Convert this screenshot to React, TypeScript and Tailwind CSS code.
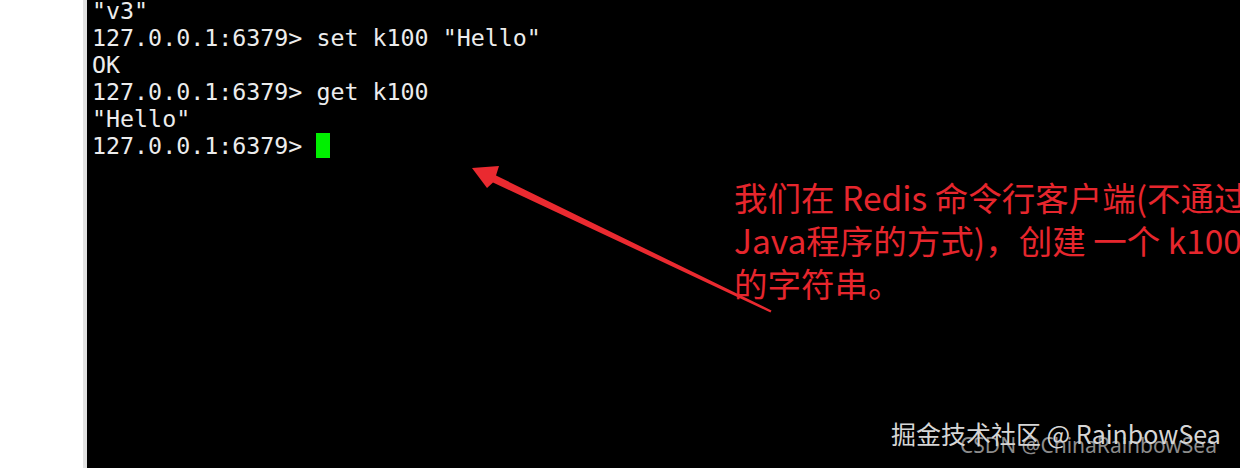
import React from "react";

const lines = [
  '"v3"',
  '127.0.0.1:6379> set k100 "Hello"',
  "OK",
  "127.0.0.1:6379> get k100",
  '"Hello"',
];

export default function App() {
  return (
    <div className="flex h-[468px] w-[1240px] overflow-hidden bg-black">
      <div className="w-[83px] shrink-0 bg-white" />
      <div className="w-[4px] shrink-0 bg-[#e2e2e2]" />
      <div className="relative flex-1 overflow-hidden bg-black">
        <div
          className="mt-[-3px] pl-[5px] text-[23.3px] leading-[27px] text-[#ececec] whitespace-pre"
          style={{ fontFamily: '"DejaVu Sans Mono", monospace' }}
        >
          {lines.map((l, i) => (
            <div key={i}>{l}</div>
          ))}
          <div className="flex items-center">
            <span>127.0.0.1:6379&gt; </span>
            <span className="inline-block h-[25px] w-[14px] bg-[#00f000]" />
          </div>
        </div>

        <svg
          className="absolute left-0 top-0"
          width="1153"
          height="468"
          viewBox="87 0 1153 468"
        >
          <polygon
            points="472,168 499,166 496,175.5 771.5,310.5 770.5,312.5 493,182.5 487,188"
            fill="#ea2a30"
          />
        </svg>

        <div
          className="absolute left-[647px] top-[175px] text-[33.5px] leading-[43px] text-[#e6262d] whitespace-nowrap"
          style={{ fontFamily: '"Noto Sans CJK SC", sans-serif' }}
        >
          <div>我们在 Redis 命令行客户端(不通过</div>
          <div>Java程序的方式)，创建 一个 k100</div>
          <div>的字符串。</div>
        </div>

        <div
          className="absolute left-[873px] top-[431px] text-[21px] leading-[28px] text-[#8c8c8c] whitespace-nowrap"
          style={{ fontFamily: '"Noto Sans", "Noto Sans CJK SC", sans-serif' }}
        >
          CSDN @ChinaRainbowSea
        </div>
        <div
          className="absolute left-[804px] top-[417px] text-[25px] leading-[32px] text-[#d6d6d6] whitespace-nowrap"
          style={{ fontFamily: '"Noto Sans CJK SC", sans-serif' }}
        >
          掘金技术社区 @ RainbowSea
        </div>
      </div>
    </div>
  );
}
